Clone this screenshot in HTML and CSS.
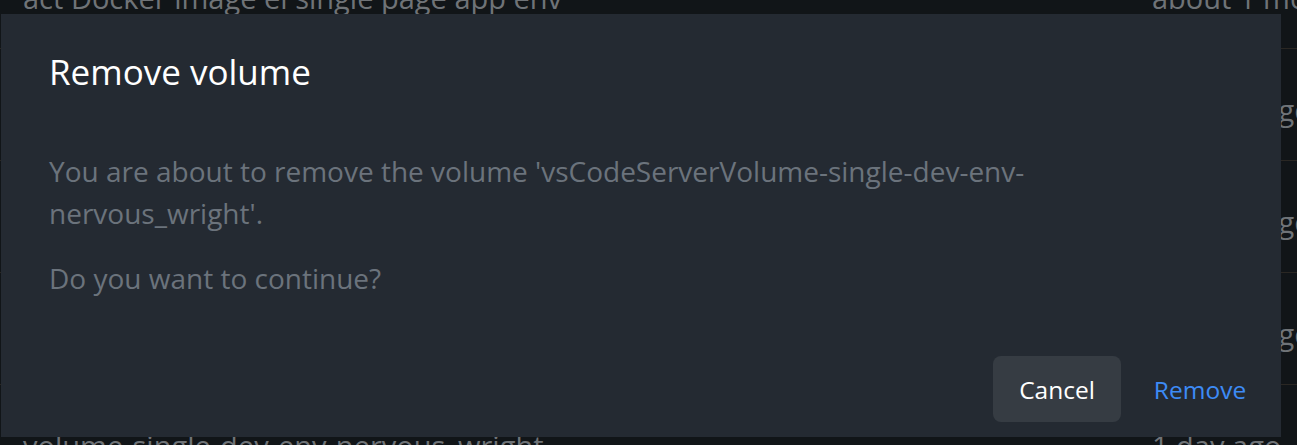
FILE: index.html
```html
<!DOCTYPE html>
<html lang="en">
<head>
<meta charset="utf-8">
<title>Remove volume</title>
<link rel="stylesheet" href="styles.css">
</head>
<body>
<div class="list">
  <div class="row"><span class="name">act Docker image el single page app env</span><span class="time">about 1 month ago</span></div>
  <div class="row"><span class="name">vsCodeServerVolume-single-dev-env</span><span class="time">12 days ago</span></div>
  <div class="row"><span class="name">single-dev-env-data</span><span class="time">11 days ago</span></div>
  <div class="row"><span class="name">vsCodeServerVolume-react-app</span><span class="time">11 days ago</span></div>
  <div class="row"><span class="name">volume-single-dev-env-nervous_wright</span><span class="time">1 day ago</span></div>
</div>
<div class="dialog" role="dialog" aria-labelledby="dlg-title">
  <h2 class="dialog-title" id="dlg-title">Remove volume</h2>
  <div class="dialog-content">
    <p class="dialog-text">You are about to remove the volume 'vsCodeServerVolume-single-dev-env-nervous_wright'.</p>
    <p class="dialog-text">Do you want to continue?</p>
  </div>
  <div class="dialog-actions">
    <button class="btn btn-cancel">Cancel</button>
    <button class="btn btn-remove">Remove</button>
  </div>
</div>
</body>
</html>
```
FILE: styles.css
```css
html, body {
  margin: 0;
  padding: 0;
}
body {
  width: 1297px;
  height: 445px;
  overflow: hidden;
  background: #111518;
  font-family: "Open Sans", "Noto Sans", sans-serif;
  position: relative;
}
.list {
  margin-top: -63px;
}
.row {
  height: 112px;
  border-bottom: 1px solid #2a2723;
  box-sizing: border-box;
  display: flex;
  align-items: center;
  padding: 9px 0 0 23px;
  font-size: 29px;
  color: #6f7377;
  white-space: nowrap;
}
.row .name {
  width: 1129px;
  flex: none;
}
.row .time {
  flex: none;
}
.dialog {
  position: absolute;
  left: 1px;
  top: 14px;
  width: 1280px;
  height: 423px;
  background: #242a32;
  box-sizing: border-box;
  display: flex;
  flex-direction: column;
  padding: 0 17px 15px 48px;
}
.dialog-title {
  margin: 0;
  padding-top: 30px;
  font-size: 35px;
  font-weight: 400;
  line-height: 56px;
  color: #ffffff;
}
.dialog-content {
  padding-top: 50px;
  padding-right: 200px;
  flex: 1;
}
.dialog-text {
  margin: 0 0 23px 0;
  font-size: 28px;
  line-height: 42px;
  color: #6b737c;
}
.dialog-actions {
  display: flex;
  justify-content: flex-end;
  gap: 15px;
}
.btn {
  font-family: inherit;
  font-size: 24.5px;
  font-weight: 500;
  height: 66px;
  width: 128px;
  border: none;
  border-radius: 8px;
  cursor: pointer;
}
.btn-cancel {
  background: #363c43;
  color: #ffffff;
}
.btn-remove {
  background: transparent;
  color: #3d8bf6;
}
```
